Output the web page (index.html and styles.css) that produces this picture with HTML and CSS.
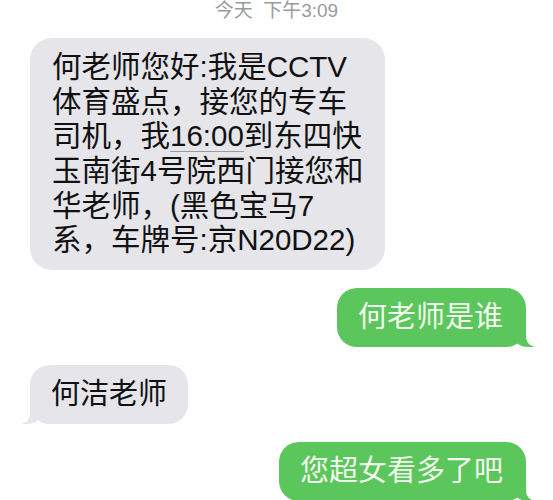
FILE: index.html
```html
<!DOCTYPE html>
<html lang="zh">
<head>
<meta charset="utf-8">
<title>Messages</title>
<link rel="stylesheet" href="styles.css">
</head>
<body>
<div class="time">今天 下午3:09</div>
<div class="thread">
  <div class="msg in multi">何老师您好:我是CCTV<br>体育盛点，接您的专车<br>司机，我<span class="link">16:00</span>到东四快<br>玉南街4号院西门接您和<br>华老师，(黑色宝马7<br>系，车牌号:京N20D22)</div>
  <div class="msg out tail">何老师是谁</div>
  <div class="msg in tail">何洁老师</div>
  <div class="msg out tail">您超女看多了吧</div>
</div>
</body>
</html>
```

FILE: styles.css
```css
html, body {
  margin: 0;
  padding: 0;
  background: #ffffff;
}
body {
  font-family: "Liberation Sans", "Noto Sans CJK SC", sans-serif;
  overflow: hidden;
}
.time {
  text-align: center;
  font-size: 19px;
  line-height: 22px;
  word-spacing: 5px;
  color: #9a9a9f;
  margin-bottom: 16px;
}
.thread {
  display: flex;
  flex-direction: column;
  gap: 18px;
  padding: 0 27px 0 30px;
}
.msg {
  position: relative;
  font-size: 29px;
  line-height: 35px;
  padding: 12px 21px;
  border-radius: 20px;
  white-space: nowrap;
}
.msg.multi {
  font-size: 29.5px;
  line-height: 34.67px;
  padding: 12px 22px;
  border-radius: 22px;
}
.in {
  align-self: flex-start;
  background: #e5e5ea;
  color: #111111;
}
.out {
  align-self: flex-end;
  background: #5bc65b;
  color: #f2fcee;
  padding-right: 23px;
}
.link {
  text-decoration: underline;
  text-decoration-color: #9a9aa0;
  text-decoration-thickness: 1px;
  text-underline-offset: 5px;
}
.tail::before,
.tail::after {
  content: "";
  position: absolute;
  bottom: 0;
  height: 24px;
}
.out.tail::before {
  right: -8px;
  width: 22px;
  background: #5bc65b;
  border-bottom-left-radius: 16px 14px;
}
.out.tail::after {
  right: -26px;
  width: 26px;
  background: #ffffff;
  border-bottom-left-radius: 10px;
}
.in.tail::before {
  left: -9px;
  width: 22px;
  background: #e5e5ea;
  border-bottom-right-radius: 16px 14px;
}
.in.tail::after {
  left: -26px;
  width: 26px;
  background: #ffffff;
  border-bottom-right-radius: 10px;
}
```
